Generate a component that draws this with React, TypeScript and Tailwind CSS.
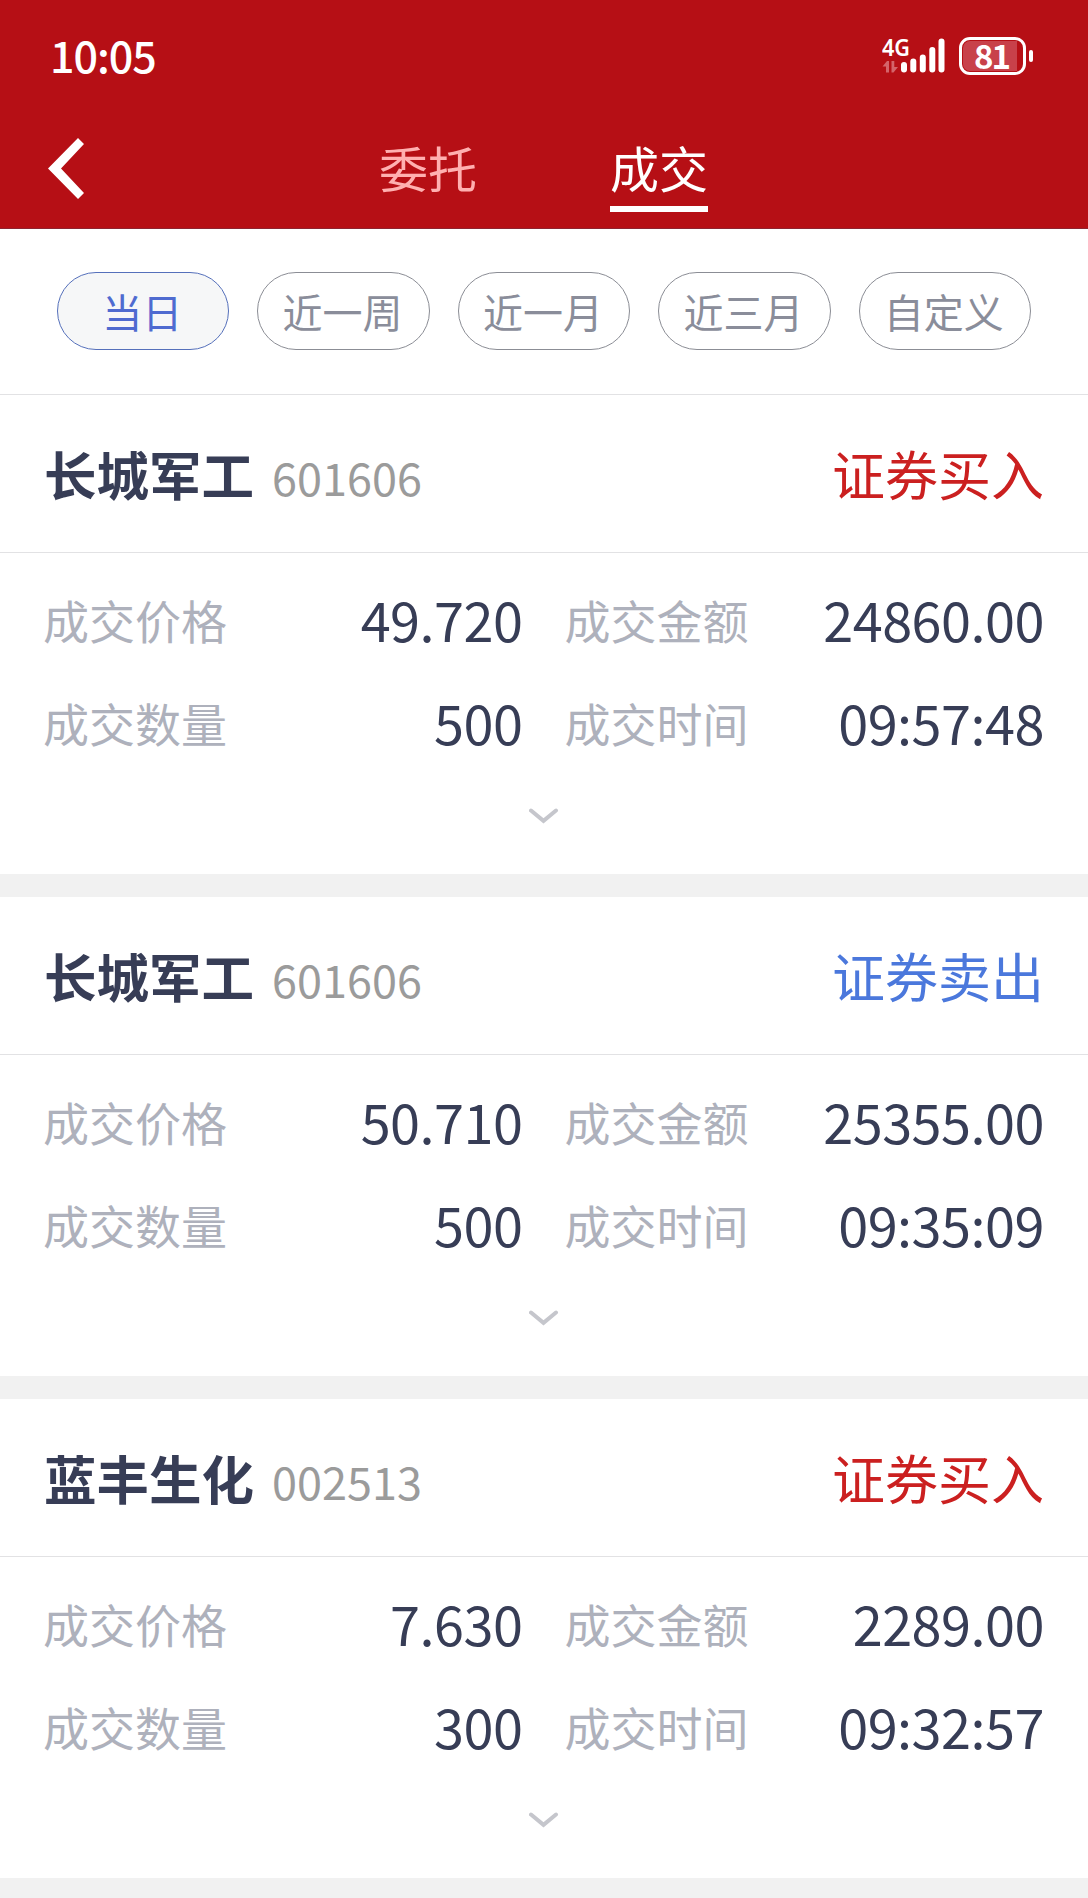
import clsx from "clsx";

type Trade = {
  name: string;
  code: string;
  side: "buy" | "sell";
  price: string;
  amount: string;
  volume: string;
  time: string;
};

const ranges = ["当日", "近一周", "近一月", "近三月", "自定义"];

const trades: Trade[] = [
  { name: "长城军工", code: "601606", side: "buy", price: "49.720", amount: "24860.00", volume: "500", time: "09:57:48" },
  { name: "长城军工", code: "601606", side: "sell", price: "50.710", amount: "25355.00", volume: "500", time: "09:35:09" },
  { name: "蓝丰生化", code: "002513", side: "buy", price: "7.630", amount: "2289.00", volume: "300", time: "09:32:57" },
];

function SignalIcon() {
  return (
    <svg width="64" height="38" viewBox="0 0 64 38" fill="none" aria-hidden="true">
      <g stroke="#fff" strokeWidth="6" strokeLinecap="round">
        <path d="M22 28v4.500M31.300 24.500v8M40.800 20.500v12M50.300 13v19.500M59.500 4.500v28" />
      </g>
      {/* data up / down arrows */}
      <path d="M0.500 29.500L5 24h2v11.500H4v-6ZM9.500 24h2.800v6h3.700L11.500 35.500h-2Z" fill="#d4646a" />
    </svg>
  );
}

function StatusBar() {
  return (
    <div className="flex h-[112px] items-center justify-between pl-[50px] pr-[55px]">
      <span className="pb-[3px] text-[43px] font-medium leading-none tracking-[-1px] text-white">10:05</span>
      <div className="flex items-center gap-[13px]">
        <div className="relative">
          <SignalIcon />
          <span className="absolute left-0 top-0 origin-left scale-x-[0.9] font-['Noto_Sans',sans-serif] text-[24px] font-semibold leading-[20px] text-white">
            4G
          </span>
        </div>
        <div className="flex items-center gap-[3px]">
          <div className="relative h-[38px] w-[67px] rounded-[11px] border-[3px] border-white p-[1px]">
            <div className="h-full w-[54px] rounded-l-[7px] bg-[#c8414a]" />
            <span className="absolute inset-0 flex items-center justify-center pb-[2px] pr-[2px] text-[33px] font-bold leading-none tracking-[-2px] text-white">
              81
            </span>
          </div>
          <div className="h-[12px] w-[4px] rounded-full bg-white" />
        </div>
      </div>
    </div>
  );
}

function NavBar() {
  return (
    <nav className="flex h-[116px] items-start pl-[48px]">
      <svg className="mt-[26px]" width="36" height="61" viewBox="0 0 36 61" aria-label="返回">
        <path d="M30 0L36 6L13 30.500L36 55L30 61L0 30.500Z" fill="#fff" />
      </svg>
      <div className="ml-[295px] flex gap-[133px] pt-[22px] text-[49px] leading-[66px]">
        <button className="flex h-[78px] items-start text-[#ffb0b0]">委托</button>
        <button className="flex h-[78px] items-start border-b-[6px] border-white text-white">成交</button>
      </div>
    </nav>
  );
}

function Field({ label, value }: { label: string; value: string }) {
  return (
    <div className="flex h-[103px] items-center justify-between">
      <span className="-ml-px pb-[3px] text-[46px] leading-none text-[#aeb1bc]">{label}</span>
      <span className="pb-[3px] text-[54px] leading-none tracking-[-0.5px] text-[#373d56]">{value}</span>
    </div>
  );
}

function TradeCard({ trade }: { trade: Trade }) {
  return (
    <article className="border-b-[23px] border-[#f1f1f1] bg-white">
      <header className="flex h-[158px] items-center justify-between border-b border-[#e2e2e4] px-[44px]">
        <div className="flex items-baseline gap-[18px]">
          <h2 className="text-[52.5px] font-bold leading-none text-[#373d56]">{trade.name}</h2>
          <span className="text-[45px] leading-none text-[#9b9b9b]">{trade.code}</span>
        </div>
        <span className={clsx("text-[53px] leading-none", trade.side === "buy" ? "text-[#cb2020]" : "text-[#4b78dc]")}>
          {trade.side === "buy" ? "证券买入" : "证券卖出"}
        </span>
      </header>
      <div className="h-[321px] pt-[16px]">
        <div className="grid grid-cols-2 gap-x-[43px] px-[44px]">
          <Field label="成交价格" value={trade.price} />
          <Field label="成交金额" value={trade.amount} />
          <Field label="成交数量" value={trade.volume} />
          <Field label="成交时间" value={trade.time} />
        </div>
        <svg className="mx-auto mt-[33px]" width="30" height="16" viewBox="0 0 30 16" fill="none" aria-hidden="true">
          <path d="M2 2.500L14.500 12.800L27 2.500" stroke="#c5c6cc" strokeWidth="4" strokeLinecap="round" />
        </svg>
      </div>
    </article>
  );
}

export default function App() {
  return (
    <main className="h-[1898px] w-[1088px] overflow-hidden bg-[#f1f1f1] font-['Noto_Sans_CJK_SC',sans-serif]">
      <div className="h-[229px] border-b border-[#8e2430] bg-[#b60f15]">
        <StatusBar />
        <NavBar />
      </div>

      <div className="flex h-[166px] gap-[28px] border-b border-[#e2e2e4] bg-white px-[57px] pt-[43px]">
        {ranges.map((range, i) => (
          <button
            key={range}
            className={clsx(
              "flex h-[78px] flex-1 items-center justify-center rounded-full border pr-[2px] text-[40px] leading-none",
              i === 0 ? "border-[#5570bb] bg-[#f6f7f8] text-[#4f6bd0]" : "border-[#8b8d95] text-[#8a8d9a]",
            )}
          >
            {range}
          </button>
        ))}
      </div>

      {trades.map((trade) => (
        <TradeCard key={trade.time} trade={trade} />
      ))}
    </main>
  );
}
